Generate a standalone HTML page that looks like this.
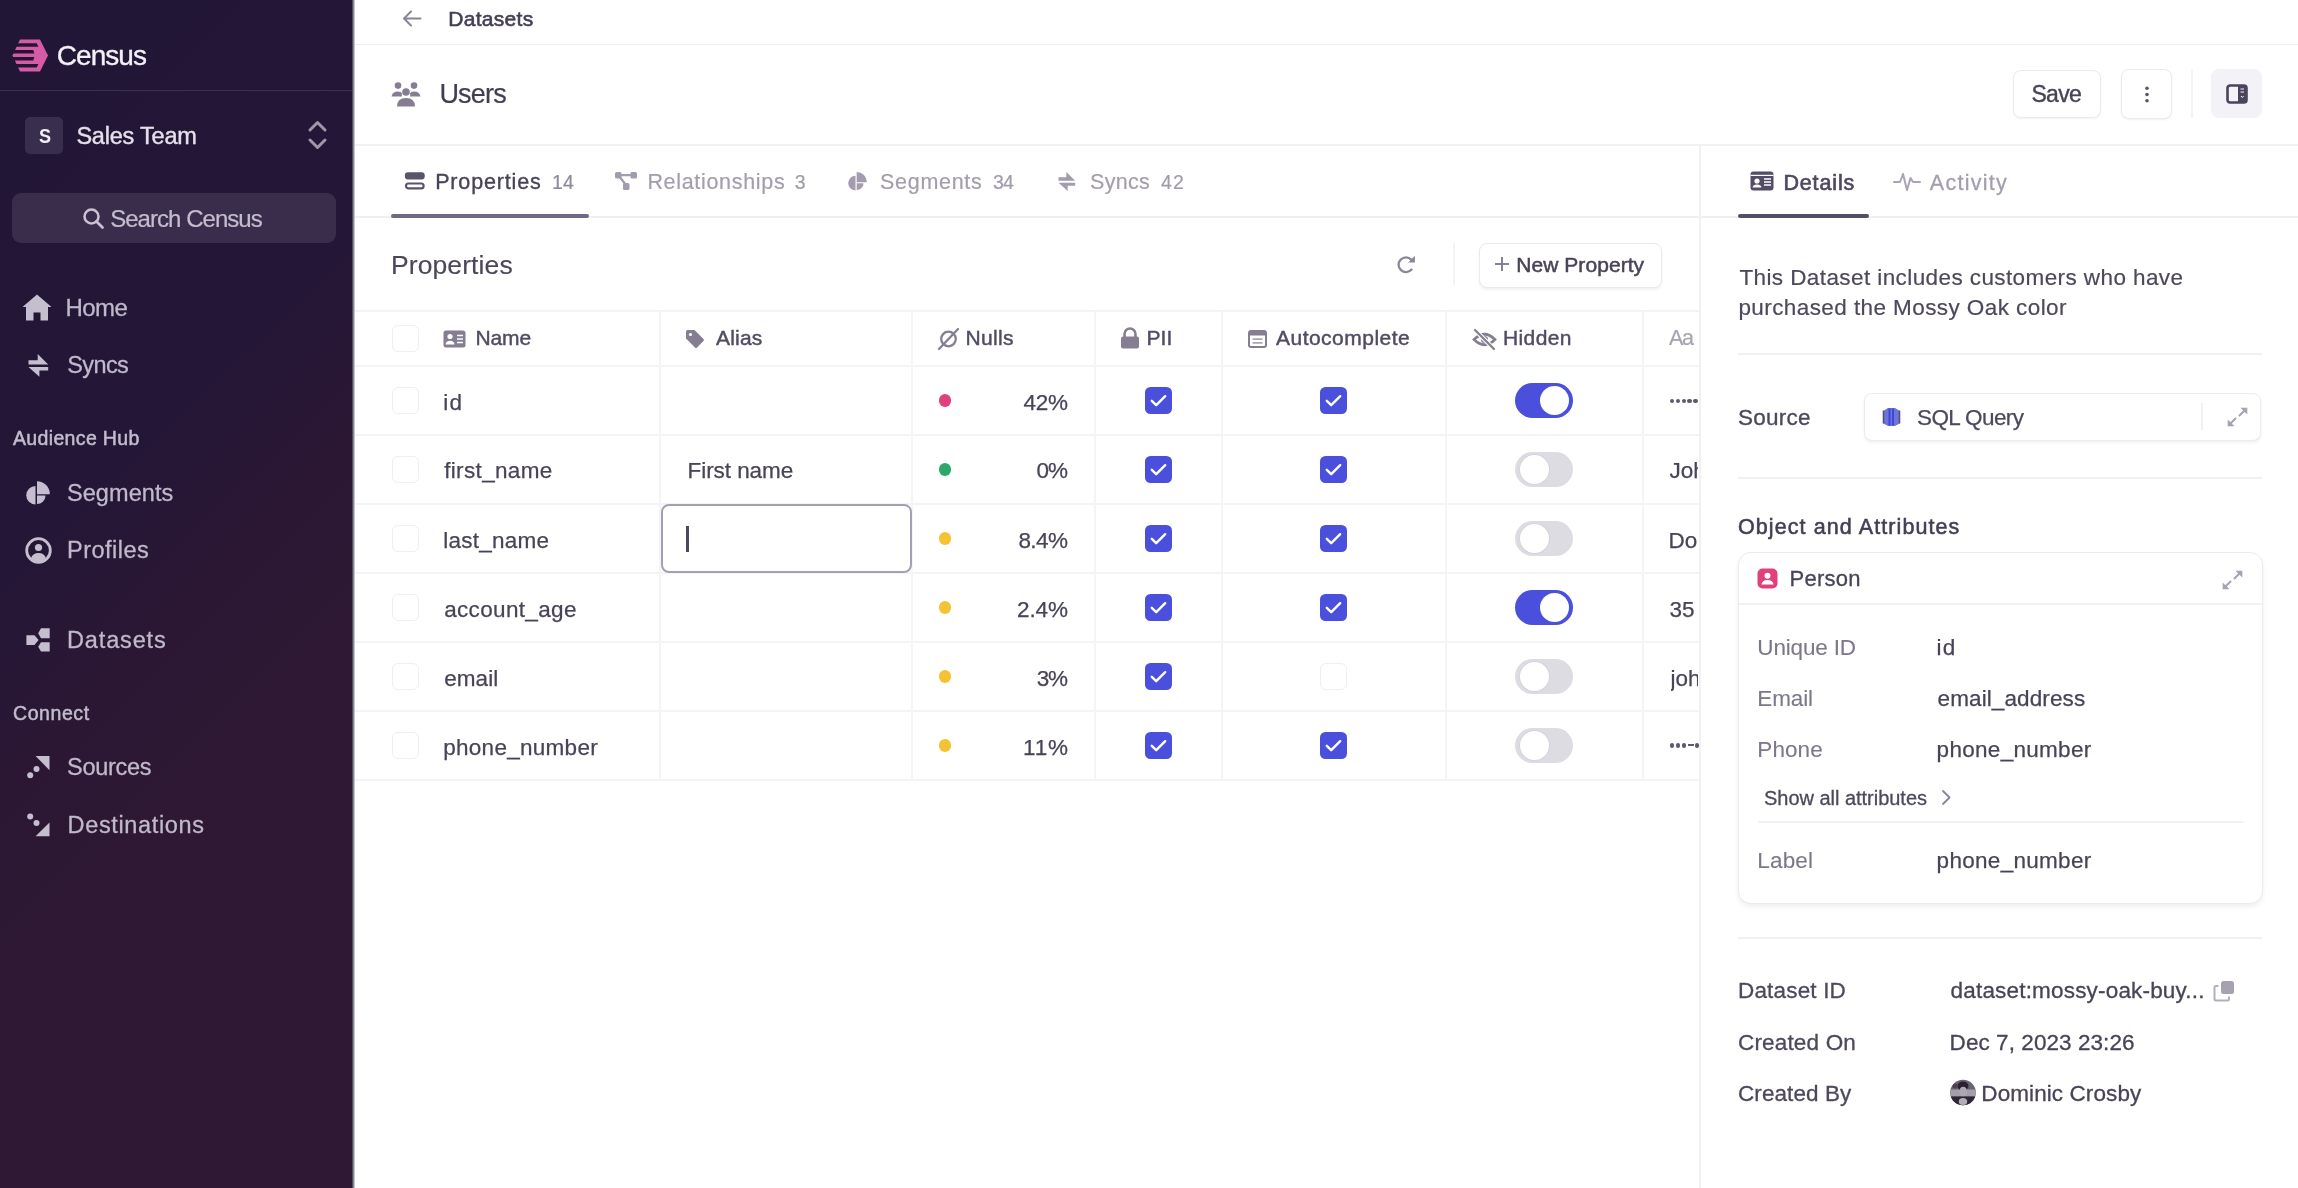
<!DOCTYPE html>
<html><head><meta charset="utf-8"><title>Census - Users Dataset</title>
<style>
html,body{margin:0;padding:0;width:2298px;height:1188px;overflow:hidden;background:#fff;font-family:"Liberation Sans", sans-serif;}
.a{position:absolute;}
.t{white-space:nowrap;}
svg.a{overflow:visible;}
</style></head><body>
<div class="a" style="left:0;top:0;width:353px;height:1188px;background:linear-gradient(135deg,#221636 0%,#231636 36%,#2b1734 52%,#2e1833 64%,#2e1833 100%)"></div>
<div class="a" style="left:352px;top:0;width:3px;height:1188px;background:linear-gradient(90deg,#3a3046,#9c97a8 60%,#e9e8ee)"></div>
<svg class="a" style="left:12px;top:39px;width:37px;height:33px;" viewBox="0 0 37 33" preserveAspectRatio="none"><g fill="#d65ba6">
<polygon points="8,0.5 28,0.5 36,16.5 28,32.5 8,32.5 0.5,16.5"/></g>
<g fill="#231635">
<polygon points="0,4.3 24.8,4.3 26.4,7.8 0,7.8"/>
<polygon points="0,10.9 21.2,10.9 22.4,14.4 0,14.4"/>
<polygon points="0,17.9 22.4,17.9 21.2,21.6 0,21.6"/>
<polygon points="0,24.9 26.4,24.9 24.8,28.6 0,28.6"/>
</g></svg>
<div class="a" style="left:0px;top:90px;width:352px;height:1px;background:#3b3049;"></div>
<div class="a" style="left:25px;top:117px;width:38px;height:37px;background:#3a2e4e;border-radius:5px;"></div>
<svg class="a" style="left:307px;top:118px;width:21px;height:34px;" viewBox="0 0 21 34" preserveAspectRatio="none"><path d="M3,12 L10.5,4.5 L18,12 M3,22 L10.5,29.5 L18,22" fill="none" stroke="#9d97a9" stroke-width="3" stroke-linecap="round" stroke-linejoin="round"/></svg>
<div class="a" style="left:12px;top:193px;width:324px;height:50px;background:#3a2d4c;border-radius:9px;"></div>
<svg class="a" style="left:82px;top:207px;width:23px;height:23px;" viewBox="0 0 23 23" preserveAspectRatio="none"><circle cx="9.5" cy="9.5" r="7" fill="none" stroke="#c8c1d3" stroke-width="2.6"/><path d="M14.5,14.5 L20.5,20.5" stroke="#c8c1d3" stroke-width="2.8" stroke-linecap="round"/></svg>
<svg class="a" style="left:22px;top:294px;width:30px;height:27px;" viewBox="0 0 30 27" preserveAspectRatio="none"><path d="M15,0.5 L29.5,13 L26,13 L26,26.5 L18.5,26.5 L18.5,18.5 L11.5,18.5 L11.5,26.5 L4,26.5 L4,13 L0.5,13 Z" fill="#c4bece"/></svg>
<svg class="a" style="left:28px;top:354px;width:21px;height:23px;" viewBox="0 0 21 23" preserveAspectRatio="none"><path d="M0.5,6.3 L9.7,6.3 L9.7,0 L20.2,10.5 L0.5,10.5 Z M20.2,13 L0.5,13 L11.4,22.7 L11.4,16.5 L20.2,16.5 Z" fill="#c4bece"/></svg>
<svg class="a" style="left:26px;top:480px;width:24px;height:25px;" viewBox="0 0 24 25" preserveAspectRatio="none"><path d="M9.5,6 A9,9 0 0 0 9.5,24.5 Z" fill="#c4bece"/><path d="M11,1.2 A12.8,12.8 0 0 1 23.8,14.2 L11,14.2 Z" fill="#c4bece"/><path d="M11,15.4 L19.5,15.4 A8.5,8.5 0 0 1 11,24 Z" fill="#c4bece"/></svg>
<svg class="a" style="left:25px;top:537px;width:27px;height:27px;" viewBox="0 0 27 27" preserveAspectRatio="none"><circle cx="13.5" cy="13.5" r="11.8" fill="none" stroke="#c4bece" stroke-width="2.8"/><circle cx="13.5" cy="10.5" r="3.6" fill="#c4bece"/><path d="M6,21 Q8,16 13.5,16 Q19,16 21,21 Q17.5,24.5 13.5,24.5 Q9.5,24.5 6,21 Z" fill="#c4bece"/></svg>
<svg class="a" style="left:26px;top:627px;width:25px;height:25px;" viewBox="0 0 25 25" preserveAspectRatio="none"><path d="M0.4,8.2 L8.5,8.2 L12.6,13 L8.5,17.9 L0.4,17.9 Z M15,1.2 L23.7,1.2 L23.7,11.3 L15,11.3 L12.2,6.2 Z M15,15.2 L23.7,15.2 L23.7,24.5 L15,24.5 L12.2,19.8 Z" fill="#c4bece"/></svg>
<svg class="a" style="left:26px;top:755px;width:25px;height:25px;" viewBox="0 0 25 25" preserveAspectRatio="none"><path d="M9.6,0.9 L23.5,0.9 L23.5,15.3 Z" fill="#c4bece"/><circle cx="10.5" cy="14" r="3" fill="#c4bece"/><circle cx="4.2" cy="20.3" r="3" fill="#c4bece"/></svg>
<svg class="a" style="left:26px;top:813px;width:25px;height:25px;" viewBox="0 0 25 25" preserveAspectRatio="none"><path d="M23.5,9.4 L23.5,23.3 L9.6,23.3 Z" fill="#c4bece"/><circle cx="4.2" cy="3.5" r="3" fill="#c4bece"/><circle cx="10.5" cy="9.9" r="3" fill="#c4bece"/></svg>
<svg class="a" style="left:402px;top:10px;width:20px;height:17px;" viewBox="0 0 20 17" preserveAspectRatio="none"><path d="M18.5,8.5 L2.5,8.5 M9,1.5 L2,8.5 L9,15.5" fill="none" stroke="#8a8497" stroke-width="2" stroke-linecap="round" stroke-linejoin="round"/></svg>
<div class="a" style="left:355px;top:44px;width:1943px;height:1px;background:#eeedf1;"></div>
<svg class="a" style="left:391px;top:82px;width:30px;height:25px;" viewBox="0 0 30 25" preserveAspectRatio="none"><g fill="#857e93"><circle cx="7" cy="3.6" r="3.3"/><circle cx="23" cy="3.6" r="3.3"/><circle cx="15" cy="10" r="3.8"/>
<path d="M0.5,14.5 Q1.5,9.5 7,9.5 Q10,9.5 11.2,11.5 Q10.5,13 10.8,14.5 Z"/><path d="M29.5,14.5 Q28.5,9.5 23,9.5 Q20,9.5 18.8,11.5 Q19.5,13 19.2,14.5 Z"/>
<path d="M6,24.5 Q6,16 15,16 Q24,16 24,24.5 Z"/></g></svg>
<div class="a" style="left:2013px;top:70px;width:88px;height:48px;background:#fff;border:1.5px solid #ebeaef;box-sizing:border-box;border-radius:8px;box-shadow:0 1px 2px rgba(40,30,60,0.06)"></div>
<div class="a" style="left:2121px;top:69px;width:51px;height:50px;background:#fff;border:1.5px solid #ebeaef;box-sizing:border-box;border-radius:8px;box-shadow:0 1px 2px rgba(40,30,60,0.06)"></div>
<svg class="a" style="left:2143px;top:85px;width:8px;height:19px;" viewBox="0 0 8 19" preserveAspectRatio="none"><g fill="#5a536b"><circle cx="4" cy="3.2" r="1.8"/><circle cx="4" cy="9.5" r="1.8"/><circle cx="4" cy="15.8" r="1.8"/></g></svg>
<div class="a" style="left:2191px;top:69px;width:2px;height:49px;background:#f4f3f6;"></div>
<div class="a" style="left:2211px;top:69px;width:51px;height:49px;background:#f3f2f6;border-radius:8px;"></div>
<svg class="a" style="left:2226px;top:84px;width:22px;height:20px;" viewBox="0 0 22 20" preserveAspectRatio="none"><rect x="1.5" y="1.5" width="19" height="17" rx="2.5" fill="none" stroke="#4b445c" stroke-width="2.6"/><rect x="12" y="1.5" width="8.5" height="17" fill="#4b445c"/><path d="M14.5,5 L18,5 M14.5,8 L18,8 M15,12 L16.3,13.5 L17.6,12" stroke="#f3f2f6" stroke-width="1" fill="none"/></svg>
<div class="a" style="left:355px;top:144px;width:1943px;height:2px;background:#f1f0f4;"></div>
<svg class="a" style="left:404px;top:171px;width:22px;height:20px;" viewBox="0 0 22 20" preserveAspectRatio="none"><rect x="0.9" y="1.3" width="19.8" height="7.3" rx="3" fill="#5a536b"/><rect x="2" y="12.5" width="17.6" height="4.9" rx="2.4" fill="none" stroke="#5a536b" stroke-width="2.2"/></svg>
<svg class="a" style="left:614px;top:171px;width:24px;height:20px;" viewBox="0 0 24 20" preserveAspectRatio="none"><g fill="#a29cae"><rect x="1" y="1" width="6.5" height="6.5" rx="1.5"/><rect x="16.5" y="1" width="6.5" height="6.5" rx="1.5"/><rect x="9" y="12" width="6.5" height="7" rx="1.5"/></g><path d="M5,4.2 L19,4.2 M5,5 L12,14" stroke="#a29cae" stroke-width="2.2"/></svg>
<svg class="a" style="left:848px;top:171px;width:19px;height:20px;" viewBox="0 0 19 20" preserveAspectRatio="none"><path d="M7.5,4.8 A7.2,7.2 0 0 0 7.5,19.4 Z" fill="#a29cae"/><path d="M8.7,1 A10.2,10.2 0 0 1 18.9,11.3 L8.7,11.3 Z" fill="#a29cae"/><path d="M8.7,12.3 L15.5,12.3 A6.8,6.8 0 0 1 8.7,19.1 Z" fill="#a29cae"/></svg>
<svg class="a" style="left:1058px;top:172px;width:18px;height:19px;" viewBox="0 0 18 19" preserveAspectRatio="none"><path d="M0.5,5.2 L8.3,5.2 L8.3,0 L17.2,8.7 L0.5,8.7 Z M17.2,10.7 L0.5,10.7 L9.7,19 L9.7,13.8 L17.2,13.8 Z" fill="#a29cae"/></svg>
<div class="a" style="left:355px;top:216px;width:1943px;height:2px;background:#f0eff3;"></div>
<div class="a" style="left:391px;top:214px;width:198px;height:4px;background:#6f6983;border-radius:2px;"></div>
<div class="a" style="left:1699px;top:145px;width:2px;height:1043px;background:#f1f0f4;"></div>
<div class="a" style="left:1738px;top:214px;width:131px;height:4px;background:#554e67;border-radius:2px;"></div>
<svg class="a" style="left:1750px;top:171px;width:24px;height:20px;" viewBox="0 0 24 20" preserveAspectRatio="none"><rect x="0.5" y="0.5" width="23" height="19" rx="3" fill="#544d66"/><rect x="0.5" y="3.8" width="23" height="1.2" fill="#fff"/><circle cx="7" cy="10" r="2.6" fill="#fff"/><path d="M2.5,16.5 Q3,13.5 7,13.5 Q11,13.5 11.5,16.5 Z" fill="#fff"/><path d="M14,8 L21,8 M14,11 L21,11 M14,14 L21,14" stroke="#fff" stroke-width="1.3"/></svg>
<svg class="a" style="left:1893px;top:171px;width:28px;height:21px;" viewBox="0 0 28 21" preserveAspectRatio="none"><path d="M1,11 L7,11 L10,3 L14,19 L17.5,7 L20,11 L27,11" fill="none" stroke="#aaa4b5" stroke-width="2" stroke-linejoin="round" stroke-linecap="round"/></svg>
<svg class="a" style="left:1396px;top:254px;width:22px;height:20px;" viewBox="0 0 22 20" preserveAspectRatio="none"><path d="M15.6,15.6 A7.4,7.4 0 1 1 15.3,5.6" fill="none" stroke="#8c8699" stroke-width="2.3" stroke-linecap="round"/><path d="M18.9,1.8 L18.9,8.6 L12.1,8.6 Z" fill="#8c8699"/></svg>
<div class="a" style="left:1453px;top:243px;width:2px;height:42px;background:#f4f3f6;"></div>
<div class="a" style="left:1479px;top:243px;width:183px;height:45px;background:#fff;border:1.5px solid #ebe9ef;box-sizing:border-box;border-radius:8px;box-shadow:0 2px 3px rgba(60,50,90,0.07)"></div>
<svg class="a" style="left:1494px;top:256px;width:16px;height:16px;" viewBox="0 0 16 16" preserveAspectRatio="none"><path d="M8,1 L8,15 M1,8 L15,8" stroke="#877f95" stroke-width="2"/></svg>
<div class="a" style="left:355px;top:310px;width:1344px;height:2px;background:#f3f2f5;"></div>
<div class="a" style="left:355px;top:365px;width:1344px;height:2px;background:#f4f3f7;"></div>
<div class="a" style="left:355px;top:434px;width:1344px;height:2px;background:#f4f3f7;"></div>
<div class="a" style="left:355px;top:503px;width:1344px;height:2px;background:#f4f3f7;"></div>
<div class="a" style="left:355px;top:572px;width:1344px;height:2px;background:#f4f3f7;"></div>
<div class="a" style="left:355px;top:641px;width:1344px;height:2px;background:#f4f3f7;"></div>
<div class="a" style="left:355px;top:710px;width:1344px;height:2px;background:#f4f3f7;"></div>
<div class="a" style="left:355px;top:779px;width:1344px;height:2px;background:#f4f3f7;"></div>
<div class="a" style="left:659px;top:311px;width:2px;height:470px;background:#f5f4f7;"></div>
<div class="a" style="left:911px;top:311px;width:2px;height:470px;background:#f5f4f7;"></div>
<div class="a" style="left:1094px;top:311px;width:2px;height:470px;background:#f5f4f7;"></div>
<div class="a" style="left:1221px;top:311px;width:2px;height:470px;background:#f5f4f7;"></div>
<div class="a" style="left:1445px;top:311px;width:2px;height:470px;background:#f5f4f7;"></div>
<div class="a" style="left:1642px;top:311px;width:2px;height:470px;background:#f5f4f7;"></div>
<div class="a" style="left:391.5px;top:325px;width:27.0px;height:27px;background:#fff;border:1.5px solid #efeef3;box-sizing:border-box;border-radius:6px;"></div>
<svg class="a" style="left:443px;top:330px;width:23px;height:18px;" viewBox="0 0 23 18" preserveAspectRatio="none"><rect x="0.5" y="0.5" width="22" height="17" rx="2.5" fill="#857e93"/><circle cx="7" cy="6.5" r="2.6" fill="#fff"/><path d="M2.5,14.5 Q3,10.8 7,10.8 Q11,10.8 11.5,14.5 Z" fill="#fff"/><path d="M14,5.5 L20,5.5 M14,9 L20,9 M14,12.5 L20,12.5" stroke="#fff" stroke-width="1.3"/></svg>
<svg class="a" style="left:685px;top:329px;width:20px;height:19px;" viewBox="0 0 20 19" preserveAspectRatio="none"><path d="M1,2.5 Q1,1 2.5,1 L9.5,1 L18.5,10 Q19.5,11 18.5,12 L12,18.5 Q11,19.5 10,18.5 L1,9.5 Z" fill="#857e93"/><circle cx="5.5" cy="5.5" r="1.6" fill="#fff"/></svg>
<svg class="a" style="left:937px;top:328px;width:23px;height:22px;" viewBox="0 0 23 22" preserveAspectRatio="none"><circle cx="11.5" cy="11" r="7.3" fill="none" stroke="#857e93" stroke-width="2.3"/><path d="M2,21 L21,1" stroke="#857e93" stroke-width="2.3" stroke-linecap="round"/></svg>
<svg class="a" style="left:1120px;top:328px;width:20px;height:21px;" viewBox="0 0 20 21" preserveAspectRatio="none"><path d="M4.5,9 L4.5,6 A5.5,5.5 0 0 1 15.5,6 L15.5,9" fill="none" stroke="#857e93" stroke-width="2.6"/><rect x="1" y="8.5" width="18" height="12" rx="2" fill="#857e93"/></svg>
<svg class="a" style="left:1248px;top:330px;width:19px;height:18px;" viewBox="0 0 19 18" preserveAspectRatio="none"><rect x="1" y="1" width="17" height="16" rx="2" fill="none" stroke="#857e93" stroke-width="2"/><rect x="1" y="1" width="17" height="4.5" fill="#857e93"/><path d="M4.5,9.2 L14.5,9.2 M4.5,12.9 L14.5,12.9" stroke="#aaa5b5" stroke-width="1.8"/></svg>
<svg class="a" style="left:1472px;top:329px;width:25px;height:21px;" viewBox="0 0 25 21" preserveAspectRatio="none"><path d="M2,10.5 Q12.5,0 23,10.5 Q12.5,21 2,10.5 Z" fill="none" stroke="#857e93" stroke-width="2.6"/><circle cx="12.5" cy="10.5" r="3.5" fill="#857e93"/><path d="M3,1 L22,20" stroke="#fff" stroke-width="4.5"/><path d="M3,1 L22,20" stroke="#857e93" stroke-width="2.3" stroke-linecap="round"/></svg>
<div class="a" style="left:391.5px;top:387.25px;width:27.0px;height:27.0px;background:#fff;border:1.5px solid #efeef3;box-sizing:border-box;border-radius:6px;"></div>
<div class="a" style="left:938.5px;top:394.45px;width:12.6px;height:12.6px;border-radius:50%;background:#e0407b"></div>
<svg class="a" style="left:1145px;top:387.25px;width:27px;height:27px" viewBox="0 0 27 27"><rect x="0" y="0" width="27" height="27" rx="5.5" fill="#4a4fdc"/><path d="M6.8,13.8 L11.2,18.2 L20.2,9.2" fill="none" stroke="#fff" stroke-width="2.4" stroke-linecap="round" stroke-linejoin="round"/></svg>
<svg class="a" style="left:1320px;top:387.25px;width:27px;height:27px" viewBox="0 0 27 27"><rect x="0" y="0" width="27" height="27" rx="5.5" fill="#4a4fdc"/><path d="M6.8,13.8 L11.2,18.2 L20.2,9.2" fill="none" stroke="#fff" stroke-width="2.4" stroke-linecap="round" stroke-linejoin="round"/></svg>
<div class="a" style="left:1515px;top:383.25px;width:58px;height:35px;border-radius:18px;background:#4a4fdc"></div>
<div class="a" style="left:1540px;top:386.25px;width:29px;height:29px;border-radius:50%;background:#fff"></div>
<div class="a" style="left:1670.0px;top:398.55px;width:4.4px;height:4.4px;border-radius:50%;background:#5f5870"></div>
<div class="a" style="left:1675.8px;top:398.55px;width:4.4px;height:4.4px;border-radius:50%;background:#5f5870"></div>
<div class="a" style="left:1681.6px;top:398.55px;width:4.4px;height:4.4px;border-radius:50%;background:#5f5870"></div>
<div class="a" style="left:1687.4px;top:398.55px;width:4.4px;height:4.4px;border-radius:50%;background:#5f5870"></div>
<div class="a" style="left:1693.2px;top:398.55px;width:4.4px;height:4.4px;border-radius:50%;background:#5f5870"></div>
<div class="a" style="left:391.5px;top:455.8px;width:27.0px;height:27.0px;background:#fff;border:1.5px solid #efeef3;box-sizing:border-box;border-radius:6px;"></div>
<div class="a" style="left:938.5px;top:463.0px;width:12.6px;height:12.6px;border-radius:50%;background:#2aa96a"></div>
<svg class="a" style="left:1145px;top:455.8px;width:27px;height:27px" viewBox="0 0 27 27"><rect x="0" y="0" width="27" height="27" rx="5.5" fill="#4a4fdc"/><path d="M6.8,13.8 L11.2,18.2 L20.2,9.2" fill="none" stroke="#fff" stroke-width="2.4" stroke-linecap="round" stroke-linejoin="round"/></svg>
<svg class="a" style="left:1320px;top:455.8px;width:27px;height:27px" viewBox="0 0 27 27"><rect x="0" y="0" width="27" height="27" rx="5.5" fill="#4a4fdc"/><path d="M6.8,13.8 L11.2,18.2 L20.2,9.2" fill="none" stroke="#fff" stroke-width="2.4" stroke-linecap="round" stroke-linejoin="round"/></svg>
<div class="a" style="left:1515px;top:451.8px;width:58px;height:35px;border-radius:18px;background:#dddce3"></div>
<div class="a" style="left:1520px;top:454.8px;width:29px;height:29px;border-radius:50%;background:#fff;box-shadow:0 0 0 1px rgba(200,196,210,0.35)"></div>
<div class="a" style="left:391.5px;top:524.9000000000001px;width:27.0px;height:27.0px;background:#fff;border:1.5px solid #efeef3;box-sizing:border-box;border-radius:6px;"></div>
<div class="a" style="left:661px;top:504px;width:251px;height:69px;background:#fff;border:2px solid #a59fb2;box-sizing:border-box;border-radius:8px;"></div>
<div class="a" style="left:686px;top:526px;width:3px;height:26px;background:#4e485b;"></div>
<div class="a" style="left:938.5px;top:532.1000000000001px;width:12.6px;height:12.6px;border-radius:50%;background:#f4c233"></div>
<svg class="a" style="left:1145px;top:524.9000000000001px;width:27px;height:27px" viewBox="0 0 27 27"><rect x="0" y="0" width="27" height="27" rx="5.5" fill="#4a4fdc"/><path d="M6.8,13.8 L11.2,18.2 L20.2,9.2" fill="none" stroke="#fff" stroke-width="2.4" stroke-linecap="round" stroke-linejoin="round"/></svg>
<svg class="a" style="left:1320px;top:524.9000000000001px;width:27px;height:27px" viewBox="0 0 27 27"><rect x="0" y="0" width="27" height="27" rx="5.5" fill="#4a4fdc"/><path d="M6.8,13.8 L11.2,18.2 L20.2,9.2" fill="none" stroke="#fff" stroke-width="2.4" stroke-linecap="round" stroke-linejoin="round"/></svg>
<div class="a" style="left:1515px;top:520.9000000000001px;width:58px;height:35px;border-radius:18px;background:#dddce3"></div>
<div class="a" style="left:1520px;top:523.9000000000001px;width:29px;height:29px;border-radius:50%;background:#fff;box-shadow:0 0 0 1px rgba(200,196,210,0.35)"></div>
<div class="a" style="left:391.5px;top:594.1px;width:27.0px;height:27.0px;background:#fff;border:1.5px solid #efeef3;box-sizing:border-box;border-radius:6px;"></div>
<div class="a" style="left:938.5px;top:601.3000000000001px;width:12.6px;height:12.6px;border-radius:50%;background:#f4c233"></div>
<svg class="a" style="left:1145px;top:594.1px;width:27px;height:27px" viewBox="0 0 27 27"><rect x="0" y="0" width="27" height="27" rx="5.5" fill="#4a4fdc"/><path d="M6.8,13.8 L11.2,18.2 L20.2,9.2" fill="none" stroke="#fff" stroke-width="2.4" stroke-linecap="round" stroke-linejoin="round"/></svg>
<svg class="a" style="left:1320px;top:594.1px;width:27px;height:27px" viewBox="0 0 27 27"><rect x="0" y="0" width="27" height="27" rx="5.5" fill="#4a4fdc"/><path d="M6.8,13.8 L11.2,18.2 L20.2,9.2" fill="none" stroke="#fff" stroke-width="2.4" stroke-linecap="round" stroke-linejoin="round"/></svg>
<div class="a" style="left:1515px;top:590.1px;width:58px;height:35px;border-radius:18px;background:#4a4fdc"></div>
<div class="a" style="left:1540px;top:593.1px;width:29px;height:29px;border-radius:50%;background:#fff"></div>
<div class="a" style="left:391.5px;top:662.85px;width:27.0px;height:27.0px;background:#fff;border:1.5px solid #efeef3;box-sizing:border-box;border-radius:6px;"></div>
<div class="a" style="left:938.5px;top:670.0500000000001px;width:12.6px;height:12.6px;border-radius:50%;background:#f4c233"></div>
<svg class="a" style="left:1145px;top:662.85px;width:27px;height:27px" viewBox="0 0 27 27"><rect x="0" y="0" width="27" height="27" rx="5.5" fill="#4a4fdc"/><path d="M6.8,13.8 L11.2,18.2 L20.2,9.2" fill="none" stroke="#fff" stroke-width="2.4" stroke-linecap="round" stroke-linejoin="round"/></svg>
<div class="a" style="left:1320px;top:662.85px;width:27px;height:27.0px;background:#fff;border:1.5px solid #efeef3;box-sizing:border-box;border-radius:6px;"></div>
<div class="a" style="left:1515px;top:658.85px;width:58px;height:35px;border-radius:18px;background:#dddce3"></div>
<div class="a" style="left:1520px;top:661.85px;width:29px;height:29px;border-radius:50%;background:#fff;box-shadow:0 0 0 1px rgba(200,196,210,0.35)"></div>
<div class="a" style="left:391.5px;top:731.85px;width:27.0px;height:27.0px;background:#fff;border:1.5px solid #efeef3;box-sizing:border-box;border-radius:6px;"></div>
<div class="a" style="left:938.5px;top:739.0500000000001px;width:12.6px;height:12.6px;border-radius:50%;background:#f4c233"></div>
<svg class="a" style="left:1145px;top:731.85px;width:27px;height:27px" viewBox="0 0 27 27"><rect x="0" y="0" width="27" height="27" rx="5.5" fill="#4a4fdc"/><path d="M6.8,13.8 L11.2,18.2 L20.2,9.2" fill="none" stroke="#fff" stroke-width="2.4" stroke-linecap="round" stroke-linejoin="round"/></svg>
<svg class="a" style="left:1320px;top:731.85px;width:27px;height:27px" viewBox="0 0 27 27"><rect x="0" y="0" width="27" height="27" rx="5.5" fill="#4a4fdc"/><path d="M6.8,13.8 L11.2,18.2 L20.2,9.2" fill="none" stroke="#fff" stroke-width="2.4" stroke-linecap="round" stroke-linejoin="round"/></svg>
<div class="a" style="left:1515px;top:727.85px;width:58px;height:35px;border-radius:18px;background:#dddce3"></div>
<div class="a" style="left:1520px;top:730.85px;width:29px;height:29px;border-radius:50%;background:#fff;box-shadow:0 0 0 1px rgba(200,196,210,0.35)"></div>
<div class="a" style="left:1670.0px;top:743.15px;width:4.4px;height:4.4px;border-radius:50%;background:#5f5870"></div>
<div class="a" style="left:1675.8px;top:743.15px;width:4.4px;height:4.4px;border-radius:50%;background:#5f5870"></div>
<div class="a" style="left:1681.6px;top:743.15px;width:4.4px;height:4.4px;border-radius:50%;background:#5f5870"></div>
<div class="a" style="left:1688px;top:744.35px;width:6px;height:2px;background:#5f5870"></div>
<div class="a" style="left:1695px;top:743.15px;width:4.4px;height:4.4px;border-radius:50%;background:#5f5870"></div>
<div class="a" style="left:1738px;top:353px;width:524px;height:2px;background:#f1f0f4;"></div>
<div class="a" style="left:1864px;top:393px;width:397px;height:48px;background:#fff;border:1.5px solid #ecebf0;box-sizing:border-box;border-radius:8px;box-shadow:0 2px 3px rgba(60,50,90,0.07)"></div>
<svg class="a" style="left:1882px;top:407px;width:19px;height:20px;" viewBox="0 0 19 20" preserveAspectRatio="none"><path d="M2,3.5 L6,1 L13,1 L17,3.5 L17.5,16.5 L13,19 L6,19 L1.5,16.5 Z" fill="#6d75dc"/><path d="M1.5,3.5 L1.5,16.5 M17.5,3.5 L17.5,16.5" stroke="#575078" stroke-width="1.6"/><path d="M7.5,1.5 L7.5,18.5 M11,1.5 L11,18.5" stroke="#3f47d6" stroke-width="2"/></svg>
<div class="a" style="left:2201px;top:403px;width:2px;height:27px;background:#f1f0f4;"></div>
<svg class="a" style="left:2227px;top:407px;width:21px;height:20px;" viewBox="0 0 21 20" preserveAspectRatio="none"><path d="M12.5,8.5 L18.5,2.5 M8.5,11.5 L2.5,17.5" stroke="#a7a1b3" stroke-width="2" stroke-linecap="round"/><path d="M13.5,0.8 L20.3,0.8 L20.3,7.6 Z M0.7,12.4 L0.7,19.2 L7.5,19.2 Z" fill="#a7a1b3"/></svg>
<div class="a" style="left:1738px;top:477px;width:524px;height:2px;background:#f1f0f4;"></div>
<div class="a" style="left:1738px;top:552px;width:525px;height:352px;background:#fff;border:1.5px solid #ecebf0;box-sizing:border-box;border-radius:13px;box-shadow:0 3px 4px rgba(60,50,90,0.08)"></div>
<div class="a" style="left:1739px;top:603px;width:523px;height:2px;background:#f1f0f4;"></div>
<svg class="a" style="left:1757px;top:568px;width:21px;height:21px;" viewBox="0 0 21 21" preserveAspectRatio="none"><rect x="0.5" y="0.5" width="20" height="20" rx="5" fill="#e2407d"/><circle cx="10.5" cy="7.8" r="3" fill="#fff"/><path d="M4.5,16.5 Q5,12 10.5,12 Q16,12 16.5,16.5 Z" fill="#fff"/></svg>
<svg class="a" style="left:2222px;top:570px;width:21px;height:20px;" viewBox="0 0 21 20" preserveAspectRatio="none"><path d="M12.5,8.5 L18.5,2.5 M8.5,11.5 L2.5,17.5" stroke="#a7a1b3" stroke-width="2" stroke-linecap="round"/><path d="M13.5,0.8 L20.3,0.8 L20.3,7.6 Z M0.7,12.4 L0.7,19.2 L7.5,19.2 Z" fill="#a7a1b3"/></svg>
<svg class="a" style="left:1940px;top:789px;width:12px;height:17px;" viewBox="0 0 12 17" preserveAspectRatio="none"><path d="M3,2 L9.5,8.5 L3,15" fill="none" stroke="#8a8497" stroke-width="1.8" stroke-linecap="round" stroke-linejoin="round"/></svg>
<div class="a" style="left:1758px;top:821px;width:485px;height:2px;background:#f1f0f4;"></div>
<div class="a" style="left:1738px;top:937px;width:524px;height:2px;background:#f1f0f4;"></div>
<svg class="a" style="left:2213px;top:980px;width:22px;height:22px;" viewBox="0 0 22 22" preserveAspectRatio="none"><rect x="8" y="1" width="13" height="13" rx="2.5" fill="#a7a2b2"/><path d="M5.5,6 L3,6 Q1.5,6 1.5,7.5 L1.5,19 Q1.5,20.5 3,20.5 L14.5,20.5 Q16,20.5 16,19 L16,16.5" fill="none" stroke="#b3aebd" stroke-width="2"/></svg>
<svg class="a" style="left:1950px;top:1079px;width:26px;height:27px;" viewBox="0 0 26 27" preserveAspectRatio="none"><defs><clipPath id="av"><circle cx="13" cy="13.5" r="12.8"/></clipPath></defs><g clip-path="url(#av)"><rect width="26" height="27" fill="#6a6372"/><rect y="10.5" width="26" height="7" fill="#a49eab"/><rect y="17.5" width="26" height="10" fill="#2e2536"/><ellipse cx="13" cy="7" rx="5.5" ry="4.5" fill="#2a2031"/><ellipse cx="13.2" cy="12.5" rx="3.9" ry="4.8" fill="#aea7b3"/><ellipse cx="13" cy="22.5" rx="4.2" ry="3.6" fill="#b3adb9"/><circle cx="5" cy="7" r="2.5" fill="#4a4252"/></g></svg>
<div class="a" style="left:0;top:0;width:2298px;height:1188px;will-change:transform">
<div class="a t" style="left:56.80px;top:42px;font-size:28px;line-height:28px;color:#f4f0f7;letter-spacing:-0.967px;-webkit-text-stroke:0.35px #f4f0f7;">Census</div>
<div class="a t" style="left:38.70px;top:125px;font-size:21px;line-height:21px;color:#f2eef5;font-weight:700;transform:scaleX(0.86);transform-origin:0 0;">S</div>
<div class="a t" style="left:76.40px;top:125px;font-size:23.5px;line-height:23.5px;color:#e6e0ec;letter-spacing:-0.211px;-webkit-text-stroke:0.4px #e6e0ec;">Sales Team</div>
<div class="a t" style="left:110.20px;top:207px;font-size:24px;line-height:24px;color:#c3bdcd;letter-spacing:-0.965px;-webkit-text-stroke:0.2px #c3bdcd;">Search Census</div>
<div class="a t" style="left:65.40px;top:296px;font-size:24px;line-height:24px;color:#bfb9ca;letter-spacing:-0.557px;-webkit-text-stroke:0.3px #bfb9ca;">Home</div>
<div class="a t" style="left:67.30px;top:354px;font-size:23.5px;line-height:23.5px;color:#bfb9ca;letter-spacing:-0.636px;-webkit-text-stroke:0.3px #bfb9ca;">Syncs</div>
<div class="a t" style="left:13.00px;top:429px;font-size:19.5px;line-height:19.5px;color:#c2bccc;letter-spacing:0.349px;-webkit-text-stroke:0.5px #c2bccc;">Audience Hub</div>
<div class="a t" style="left:67.00px;top:482px;font-size:23.5px;line-height:23.5px;color:#bfb9ca;letter-spacing:0.063px;-webkit-text-stroke:0.3px #bfb9ca;">Segments</div>
<div class="a t" style="left:67.00px;top:539px;font-size:23.5px;line-height:23.5px;color:#bfb9ca;letter-spacing:0.484px;-webkit-text-stroke:0.3px #bfb9ca;">Profiles</div>
<div class="a t" style="left:67.00px;top:629px;font-size:23.5px;line-height:23.5px;color:#bfb9ca;letter-spacing:0.859px;-webkit-text-stroke:0.3px #bfb9ca;">Datasets</div>
<div class="a t" style="left:13.00px;top:704px;font-size:19.5px;line-height:19.5px;color:#c2bccc;letter-spacing:0.581px;-webkit-text-stroke:0.5px #c2bccc;">Connect</div>
<div class="a t" style="left:67.00px;top:756px;font-size:23.5px;line-height:23.5px;color:#bfb9ca;letter-spacing:-0.293px;-webkit-text-stroke:0.3px #bfb9ca;">Sources</div>
<div class="a t" style="left:67.60px;top:814px;font-size:23.5px;line-height:23.5px;color:#bfb9ca;letter-spacing:0.648px;-webkit-text-stroke:0.3px #bfb9ca;">Destinations</div>
<div class="a t" style="left:448.30px;top:8px;font-size:21px;line-height:21px;color:#443e54;letter-spacing:0.290px;-webkit-text-stroke:0.6px #443e54;">Datasets</div>
<div class="a t" style="left:439.40px;top:81px;font-size:27px;line-height:27px;color:#433d53;letter-spacing:-0.776px;-webkit-text-stroke:0.2px #433d53;">Users</div>
<div class="a t" style="left:2031.40px;top:83px;font-size:23px;line-height:23px;color:#494357;letter-spacing:-0.644px;-webkit-text-stroke:0.4px #494357;">Save</div>
<div class="a t" style="left:435.20px;top:172px;font-size:21.5px;line-height:21.5px;color:#494357;letter-spacing:0.840px;-webkit-text-stroke:0.35px #494357;">Properties</div>
<div class="a t" style="left:552.00px;top:173px;font-size:19.5px;line-height:19.5px;color:#8f899c;letter-spacing:0.155px;-webkit-text-stroke:0.2px #8f899c;">14</div>
<div class="a t" style="left:647.40px;top:172px;font-size:21.5px;line-height:21.5px;color:#a39dae;letter-spacing:0.681px;-webkit-text-stroke:0.2px #a39dae;">Relationships</div>
<div class="a t" style="left:794.70px;top:173px;font-size:19.5px;line-height:19.5px;color:#a19bab;-webkit-text-stroke:0.2px #a19bab;">3</div>
<div class="a t" style="left:880.00px;top:172px;font-size:21.5px;line-height:21.5px;color:#a39dae;letter-spacing:0.707px;-webkit-text-stroke:0.2px #a39dae;">Segments</div>
<div class="a t" style="left:993.00px;top:173px;font-size:19.5px;line-height:19.5px;color:#a19bab;letter-spacing:-0.845px;-webkit-text-stroke:0.2px #a19bab;">34</div>
<div class="a t" style="left:1090.00px;top:172px;font-size:21.5px;line-height:21.5px;color:#a39dae;letter-spacing:0.301px;-webkit-text-stroke:0.2px #a39dae;">Syncs</div>
<div class="a t" style="left:1161.00px;top:173px;font-size:19.5px;line-height:19.5px;color:#a19bab;letter-spacing:1.155px;-webkit-text-stroke:0.2px #a19bab;">42</div>
<div class="a t" style="left:1783.40px;top:173px;font-size:21.5px;line-height:21.5px;color:#4f4862;letter-spacing:0.872px;-webkit-text-stroke:0.65px #4f4862;">Details</div>
<div class="a t" style="left:1929.80px;top:173px;font-size:21.5px;line-height:21.5px;color:#a39dae;letter-spacing:1.266px;-webkit-text-stroke:0.3px #a39dae;">Activity</div>
<div class="a t" style="left:391.00px;top:252px;font-size:26.5px;line-height:26.5px;color:#4d4759;letter-spacing:0.097px;-webkit-text-stroke:0.15px #4d4759;">Properties</div>
<div class="a t" style="left:1516.20px;top:254px;font-size:21px;line-height:21px;color:#494357;letter-spacing:0.063px;-webkit-text-stroke:0.5px #494357;">New Property</div>
<div class="a t" style="left:475.50px;top:327px;font-size:21px;line-height:21px;color:#524b63;letter-spacing:-0.113px;-webkit-text-stroke:0.45px #524b63;">Name</div>
<div class="a t" style="left:716.00px;top:327px;font-size:21px;line-height:21px;color:#524b63;letter-spacing:0.196px;-webkit-text-stroke:0.45px #524b63;">Alias</div>
<div class="a t" style="left:965.40px;top:327px;font-size:21px;line-height:21px;color:#524b63;letter-spacing:0.356px;-webkit-text-stroke:0.45px #524b63;">Nulls</div>
<div class="a t" style="left:1146.40px;top:327px;font-size:21px;line-height:21px;color:#524b63;letter-spacing:0.079px;-webkit-text-stroke:0.45px #524b63;">PII</div>
<div class="a t" style="left:1276.00px;top:327px;font-size:21px;line-height:21px;color:#524b63;letter-spacing:0.479px;-webkit-text-stroke:0.45px #524b63;">Autocomplete</div>
<div class="a t" style="left:1503.00px;top:327px;font-size:21px;line-height:21px;color:#524b63;letter-spacing:0.386px;-webkit-text-stroke:0.45px #524b63;">Hidden</div>
<div class="a t" style="left:1669.00px;top:328px;font-size:21.5px;line-height:21.5px;color:#a7a2b0;letter-spacing:-1.340px;-webkit-text-stroke:0.2px #a7a2b0;">Aa</div>
<div class="a t" style="left:443.20px;top:392px;font-size:22.5px;line-height:22.5px;color:#494357;letter-spacing:1.401px;-webkit-text-stroke:0.25px #494357;">id</div>
<div class="a t" style="left:1023.50px;top:392px;font-size:22.5px;line-height:22.5px;color:#494357;letter-spacing:-0.263px;-webkit-text-stroke:0.25px #494357;">42%</div>
<div class="a t" style="left:444.20px;top:460px;font-size:22.5px;line-height:22.5px;color:#494357;letter-spacing:0.341px;-webkit-text-stroke:0.25px #494357;">first_name</div>
<div class="a t" style="left:687.60px;top:460px;font-size:22.5px;line-height:22.5px;color:#494357;letter-spacing:-0.073px;-webkit-text-stroke:0.25px #494357;">First name</div>
<div class="a t" style="left:1036.50px;top:460px;font-size:22.5px;line-height:22.5px;color:#494357;letter-spacing:-1.013px;-webkit-text-stroke:0.25px #494357;">0%</div>
<div class="a t" style="left:1669.60px;top:460px;font-size:22.5px;line-height:22.5px;color:#494357;-webkit-text-stroke:0.25px #494357;width:28.90px;overflow:hidden;">John</div>
<div class="a t" style="left:443.20px;top:530px;font-size:22.5px;line-height:22.5px;color:#494357;letter-spacing:0.263px;-webkit-text-stroke:0.25px #494357;">last_name</div>
<div class="a t" style="left:1018.40px;top:530px;font-size:22.5px;line-height:22.5px;color:#494357;letter-spacing:-0.559px;-webkit-text-stroke:0.25px #494357;">8.4%</div>
<div class="a t" style="left:1668.60px;top:530px;font-size:22.5px;line-height:22.5px;color:#494357;-webkit-text-stroke:0.25px #494357;width:29.90px;overflow:hidden;">Doe</div>
<div class="a t" style="left:444.20px;top:599px;font-size:22.5px;line-height:22.5px;color:#494357;letter-spacing:0.335px;-webkit-text-stroke:0.25px #494357;">account_age</div>
<div class="a t" style="left:1017.00px;top:599px;font-size:22.5px;line-height:22.5px;color:#494357;letter-spacing:-0.093px;-webkit-text-stroke:0.25px #494357;">2.4%</div>
<div class="a t" style="left:1669.60px;top:599px;font-size:22.5px;line-height:22.5px;color:#494357;-webkit-text-stroke:0.25px #494357;width:28.90px;overflow:hidden;">35</div>
<div class="a t" style="left:444.20px;top:668px;font-size:22.5px;line-height:22.5px;color:#494357;letter-spacing:0.083px;-webkit-text-stroke:0.25px #494357;">email</div>
<div class="a t" style="left:1036.80px;top:668px;font-size:22.5px;line-height:22.5px;color:#494357;letter-spacing:-1.313px;-webkit-text-stroke:0.25px #494357;">3%</div>
<div class="a t" style="left:1670.60px;top:668px;font-size:22.5px;line-height:22.5px;color:#494357;-webkit-text-stroke:0.25px #494357;width:27.90px;overflow:hidden;">john</div>
<div class="a t" style="left:443.20px;top:737px;font-size:22.5px;line-height:22.5px;color:#494357;letter-spacing:0.284px;-webkit-text-stroke:0.25px #494357;">phone_number</div>
<div class="a t" style="left:1023.00px;top:737px;font-size:22.5px;line-height:22.5px;color:#494357;letter-spacing:0.822px;-webkit-text-stroke:0.25px #494357;">11%</div>
<div class="a t" style="left:1739.40px;top:267px;font-size:22.5px;line-height:22.5px;color:#4e485b;letter-spacing:0.408px;-webkit-text-stroke:0.2px #4e485b;">This Dataset includes customers who have</div>
<div class="a t" style="left:1738.40px;top:297px;font-size:22.5px;line-height:22.5px;color:#4e485b;letter-spacing:0.418px;-webkit-text-stroke:0.2px #4e485b;">purchased the Mossy Oak color</div>
<div class="a t" style="left:1737.90px;top:407px;font-size:22.5px;line-height:22.5px;color:#4e485b;letter-spacing:0.245px;-webkit-text-stroke:0.35px #4e485b;">Source</div>
<div class="a t" style="left:1917.00px;top:407px;font-size:22.5px;line-height:22.5px;color:#4e485b;letter-spacing:-0.587px;-webkit-text-stroke:0.25px #4e485b;">SQL Query</div>
<div class="a t" style="left:1738.00px;top:517px;font-size:21.5px;line-height:21.5px;color:#443e55;letter-spacing:1.089px;-webkit-text-stroke:0.55px #443e55;">Object and Attributes</div>
<div class="a t" style="left:1789.60px;top:568px;font-size:22px;line-height:22px;color:#494357;letter-spacing:0.226px;-webkit-text-stroke:0.3px #494357;">Person</div>
<div class="a t" style="left:1757.30px;top:637px;font-size:22.5px;line-height:22.5px;color:#7d778a;letter-spacing:-0.163px;-webkit-text-stroke:0.1px #7d778a;">Unique ID</div>
<div class="a t" style="left:1936.60px;top:637px;font-size:22.5px;line-height:22.5px;color:#494357;letter-spacing:1.201px;-webkit-text-stroke:0.25px #494357;">id</div>
<div class="a t" style="left:1757.30px;top:688px;font-size:22.5px;line-height:22.5px;color:#7d778a;letter-spacing:-0.141px;-webkit-text-stroke:0.1px #7d778a;">Email</div>
<div class="a t" style="left:1937.60px;top:688px;font-size:22.5px;line-height:22.5px;color:#494357;letter-spacing:0.102px;-webkit-text-stroke:0.25px #494357;">email_address</div>
<div class="a t" style="left:1757.30px;top:739px;font-size:22.5px;line-height:22.5px;color:#7d778a;letter-spacing:0.088px;-webkit-text-stroke:0.1px #7d778a;">Phone</div>
<div class="a t" style="left:1936.60px;top:739px;font-size:22.5px;line-height:22.5px;color:#494357;letter-spacing:0.293px;-webkit-text-stroke:0.25px #494357;">phone_number</div>
<div class="a t" style="left:1764.00px;top:788px;font-size:20px;line-height:20px;color:#4e485b;letter-spacing:-0.023px;-webkit-text-stroke:0.3px #4e485b;">Show all attributes</div>
<div class="a t" style="left:1757.30px;top:850px;font-size:22.5px;line-height:22.5px;color:#7d778a;letter-spacing:0.162px;-webkit-text-stroke:0.1px #7d778a;">Label</div>
<div class="a t" style="left:1936.60px;top:850px;font-size:22.5px;line-height:22.5px;color:#494357;letter-spacing:0.293px;-webkit-text-stroke:0.25px #494357;">phone_number</div>
<div class="a t" style="left:1738.00px;top:980px;font-size:22.5px;line-height:22.5px;color:#4e485b;letter-spacing:0.173px;-webkit-text-stroke:0.3px #4e485b;">Dataset ID</div>
<div class="a t" style="left:1950.60px;top:980px;font-size:22.5px;line-height:22.5px;color:#494357;letter-spacing:0.181px;-webkit-text-stroke:0.3px #494357;">dataset:mossy-oak-buy...</div>
<div class="a t" style="left:1738.00px;top:1032px;font-size:22.5px;line-height:22.5px;color:#4e485b;letter-spacing:0.167px;-webkit-text-stroke:0.3px #4e485b;">Created On</div>
<div class="a t" style="left:1949.60px;top:1032px;font-size:22.5px;line-height:22.5px;color:#494357;letter-spacing:0.064px;-webkit-text-stroke:0.3px #494357;">Dec 7, 2023 23:26</div>
<div class="a t" style="left:1738.00px;top:1083px;font-size:22.5px;line-height:22.5px;color:#4e485b;letter-spacing:0.077px;-webkit-text-stroke:0.3px #4e485b;">Created By</div>
<div class="a t" style="left:1981.30px;top:1083px;font-size:22.5px;line-height:22.5px;color:#494357;letter-spacing:0.090px;-webkit-text-stroke:0.3px #494357;">Dominic Crosby</div>
</div>
</body></html>
